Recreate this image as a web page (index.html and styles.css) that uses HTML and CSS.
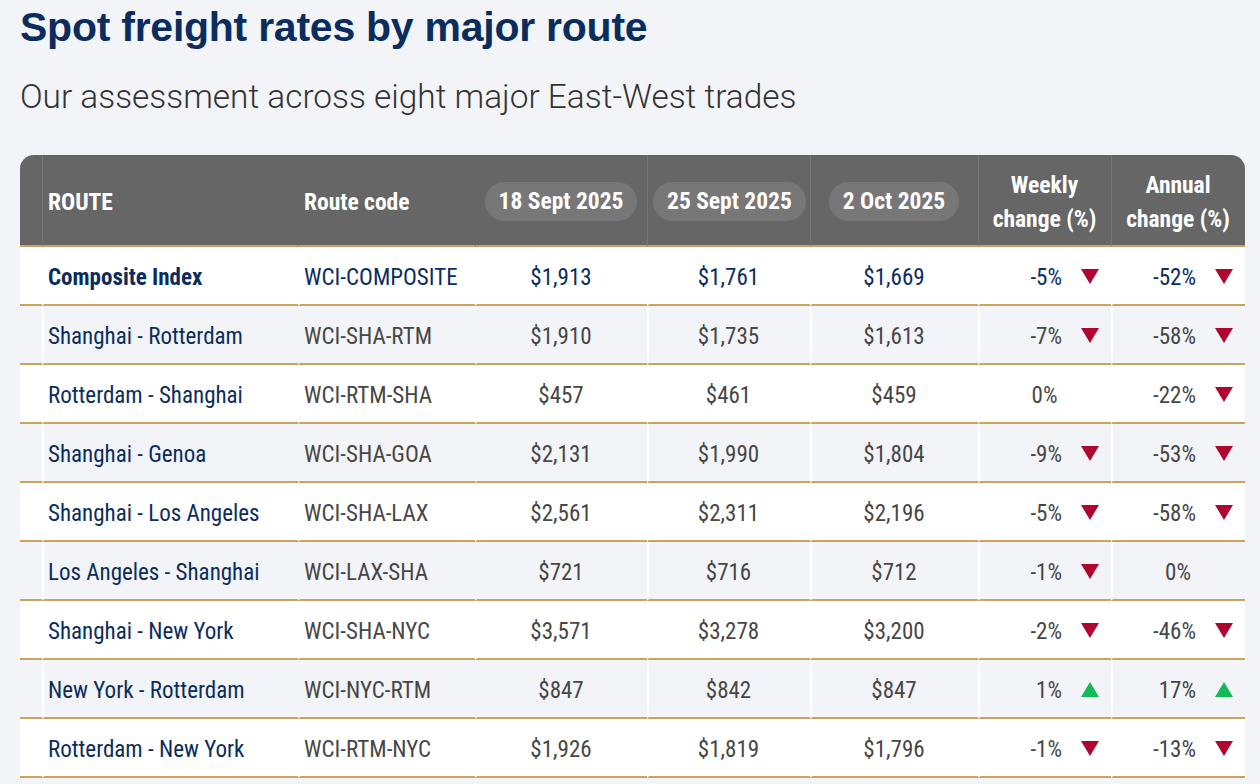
FILE: index.html
```html
<!DOCTYPE html>
<html lang="en">
<head>
<meta charset="utf-8">
<title>Spot freight rates by major route</title>
<link rel="stylesheet" href="styles.css">
</head>
<body>
<main class="page">
  <h1 class="title">Spot freight rates by major route</h1>
  <p class="subtitle">Our assessment across eight major East-West trades</p>
  <table class="rates">
    <colgroup>
      <col class="c-pad"><col class="c-route"><col class="c-code"><col class="c-d1"><col class="c-d2"><col class="c-d3"><col class="c-wk"><col class="c-yr">
    </colgroup>
    <thead>
      <tr>
        <th class="pad"></th>
        <th class="left">ROUTE</th>
        <th class="left nosep">Route code</th>
        <th class="nosep"><span class="pill">18 Sept 2025</span></th>
        <th><span class="pill">25 Sept 2025</span></th>
        <th><span class="pill">2 Oct 2025</span></th>
        <th class="two">Weekly<br>change (%)</th>
        <th class="two last">Annual<br>change (%)</th>
      </tr>
    </thead>
    <tbody>
      <tr class="composite">
        <td class="pad"></td><td class="route">Composite Index</td><td class="code nosep">WCI-COMPOSITE</td>
        <td class="num nosep">$1,913</td><td class="num">$1,761</td><td class="num">$1,669</td>
        <td class="chg">-5%<i class="tri down"></i></td><td class="chg">-52%<i class="tri down"></i></td>
      </tr>
      <tr>
        <td class="pad"></td><td class="route">Shanghai - Rotterdam</td><td class="code nosep">WCI-SHA-RTM</td>
        <td class="num nosep">$1,910</td><td class="num">$1,735</td><td class="num">$1,613</td>
        <td class="chg">-7%<i class="tri down"></i></td><td class="chg">-58%<i class="tri down"></i></td>
      </tr>
      <tr>
        <td class="pad"></td><td class="route">Rotterdam - Shanghai</td><td class="code nosep">WCI-RTM-SHA</td>
        <td class="num nosep">$457</td><td class="num">$461</td><td class="num">$459</td>
        <td class="flat">0%</td><td class="chg">-22%<i class="tri down"></i></td>
      </tr>
      <tr>
        <td class="pad"></td><td class="route">Shanghai - Genoa</td><td class="code nosep">WCI-SHA-GOA</td>
        <td class="num nosep">$2,131</td><td class="num">$1,990</td><td class="num">$1,804</td>
        <td class="chg">-9%<i class="tri down"></i></td><td class="chg">-53%<i class="tri down"></i></td>
      </tr>
      <tr>
        <td class="pad"></td><td class="route">Shanghai - Los Angeles</td><td class="code nosep">WCI-SHA-LAX</td>
        <td class="num nosep">$2,561</td><td class="num">$2,311</td><td class="num">$2,196</td>
        <td class="chg">-5%<i class="tri down"></i></td><td class="chg">-58%<i class="tri down"></i></td>
      </tr>
      <tr>
        <td class="pad"></td><td class="route">Los Angeles - Shanghai</td><td class="code nosep">WCI-LAX-SHA</td>
        <td class="num nosep">$721</td><td class="num">$716</td><td class="num">$712</td>
        <td class="chg">-1%<i class="tri down"></i></td><td class="flat">0%</td>
      </tr>
      <tr>
        <td class="pad"></td><td class="route">Shanghai - New York</td><td class="code nosep">WCI-SHA-NYC</td>
        <td class="num nosep">$3,571</td><td class="num">$3,278</td><td class="num">$3,200</td>
        <td class="chg">-2%<i class="tri down"></i></td><td class="chg">-46%<i class="tri down"></i></td>
      </tr>
      <tr>
        <td class="pad"></td><td class="route">New York - Rotterdam</td><td class="code nosep">WCI-NYC-RTM</td>
        <td class="num nosep">$847</td><td class="num">$842</td><td class="num">$847</td>
        <td class="chg">1%<i class="tri up"></i></td><td class="chg">17%<i class="tri up"></i></td>
      </tr>
      <tr>
        <td class="pad"></td><td class="route">Rotterdam - New York</td><td class="code nosep">WCI-RTM-NYC</td>
        <td class="num nosep">$1,926</td><td class="num">$1,819</td><td class="num">$1,796</td>
        <td class="chg">-1%<i class="tri down"></i></td><td class="chg">-13%<i class="tri down"></i></td>
      </tr>
    </tbody>
  </table>
</main>
</body>
</html>
```

FILE: styles.css
```css
html, body {
  margin: 0;
  padding: 0;
  background: #f2f4f7;
}

.page {
  padding: 0 15px 0 20px;
  font-family: "Liberation Sans", Arial, sans-serif;
}

.title {
  margin: 0;
  padding-top: 3px;
  font-size: 41px;
  line-height: 48px;
  font-weight: 700;
  color: #0b2d5e;
  letter-spacing: -0.25px;
}

.subtitle {
  margin: 0;
  padding-top: 26px;
  font-family: "Roboto", "Liberation Sans", sans-serif;
  font-size: 33.4px;
  line-height: 40px;
  font-weight: 300;
  color: #333333;
}

.rates {
  margin-top: 38px;
  width: 1225px;
  table-layout: fixed;
  border-collapse: separate;
  border-spacing: 0;
  font-family: "Roboto Condensed", "Liberation Sans Narrow", sans-serif;
  font-size: 23px;
}

.c-pad { width: 22px; }
.c-route { width: 256px; }
.c-code { width: 177px; }
.c-d1 { width: 172px; }
.c-d2 { width: 163px; }
.c-d3 { width: 168px; }
.c-wk { width: 133px; }
.c-yr { width: 134px; }

.rates th {
  height: 87px;
  padding: 3px 6px 0 5px;
  background: #666666;
  color: #ffffff;
  font-weight: 700;
  font-size: 23.5px;
  text-align: center;
  border-left: 1px solid #767676;
  border-bottom: 2px solid #c9a45e;
  line-height: 34px;
}

.rates th.pad {
  padding: 0;
  border-left: none;
  border-top-left-radius: 14px;
}

.rates th.last {
  border-top-right-radius: 14px;
}

.rates th.left {
  text-align: left;
}

.rates th.nosep,
.rates td.nosep {
  border-left-color: transparent;
}

.pill {
  display: inline-block;
  padding: 0 14px;
  height: 39px;
  line-height: 39px;
  border-radius: 20px;
  background: #777777;
  white-space: nowrap;
}

.rates td {
  height: 54px;
  padding: 3px 6px 0 4px;
  border-left: 2px solid #ffffff;
  border-bottom: 2px solid #c9a45e;
  color: #474747;
  text-align: center;
  white-space: nowrap;
  background: #ffffff;
}

.rates tbody tr:nth-child(even) td {
  background: #f2f4f7;
}

.rates tbody tr:nth-child(even) td.nosep {
  border-left-color: #f2f4f7;
}

.rates td.pad {
  border-left: none;
  padding: 0;
}

.rates td.route {
  text-align: left;
  color: #0b2d5e;
}

.rates td.code {
  text-align: left;
}

.rates tr.composite td {
  color: #0b2d5e;
}

.rates tr.composite td.route {
  font-weight: 700;
}

.rates td.chg {
  text-align: right;
  padding-right: 12px;
}

.rates td.flat {
  text-align: center;
}

.tri {
  display: inline-block;
  width: 0;
  height: 0;
  margin-left: 19px;
  border-left: 9px solid transparent;
  border-right: 9px solid transparent;
  vertical-align: 1px;
}

.tri.down {
  border-top: 15px solid #b0052f;
}

.tri.up {
  border-bottom: 15px solid #16b85a;
}
```
